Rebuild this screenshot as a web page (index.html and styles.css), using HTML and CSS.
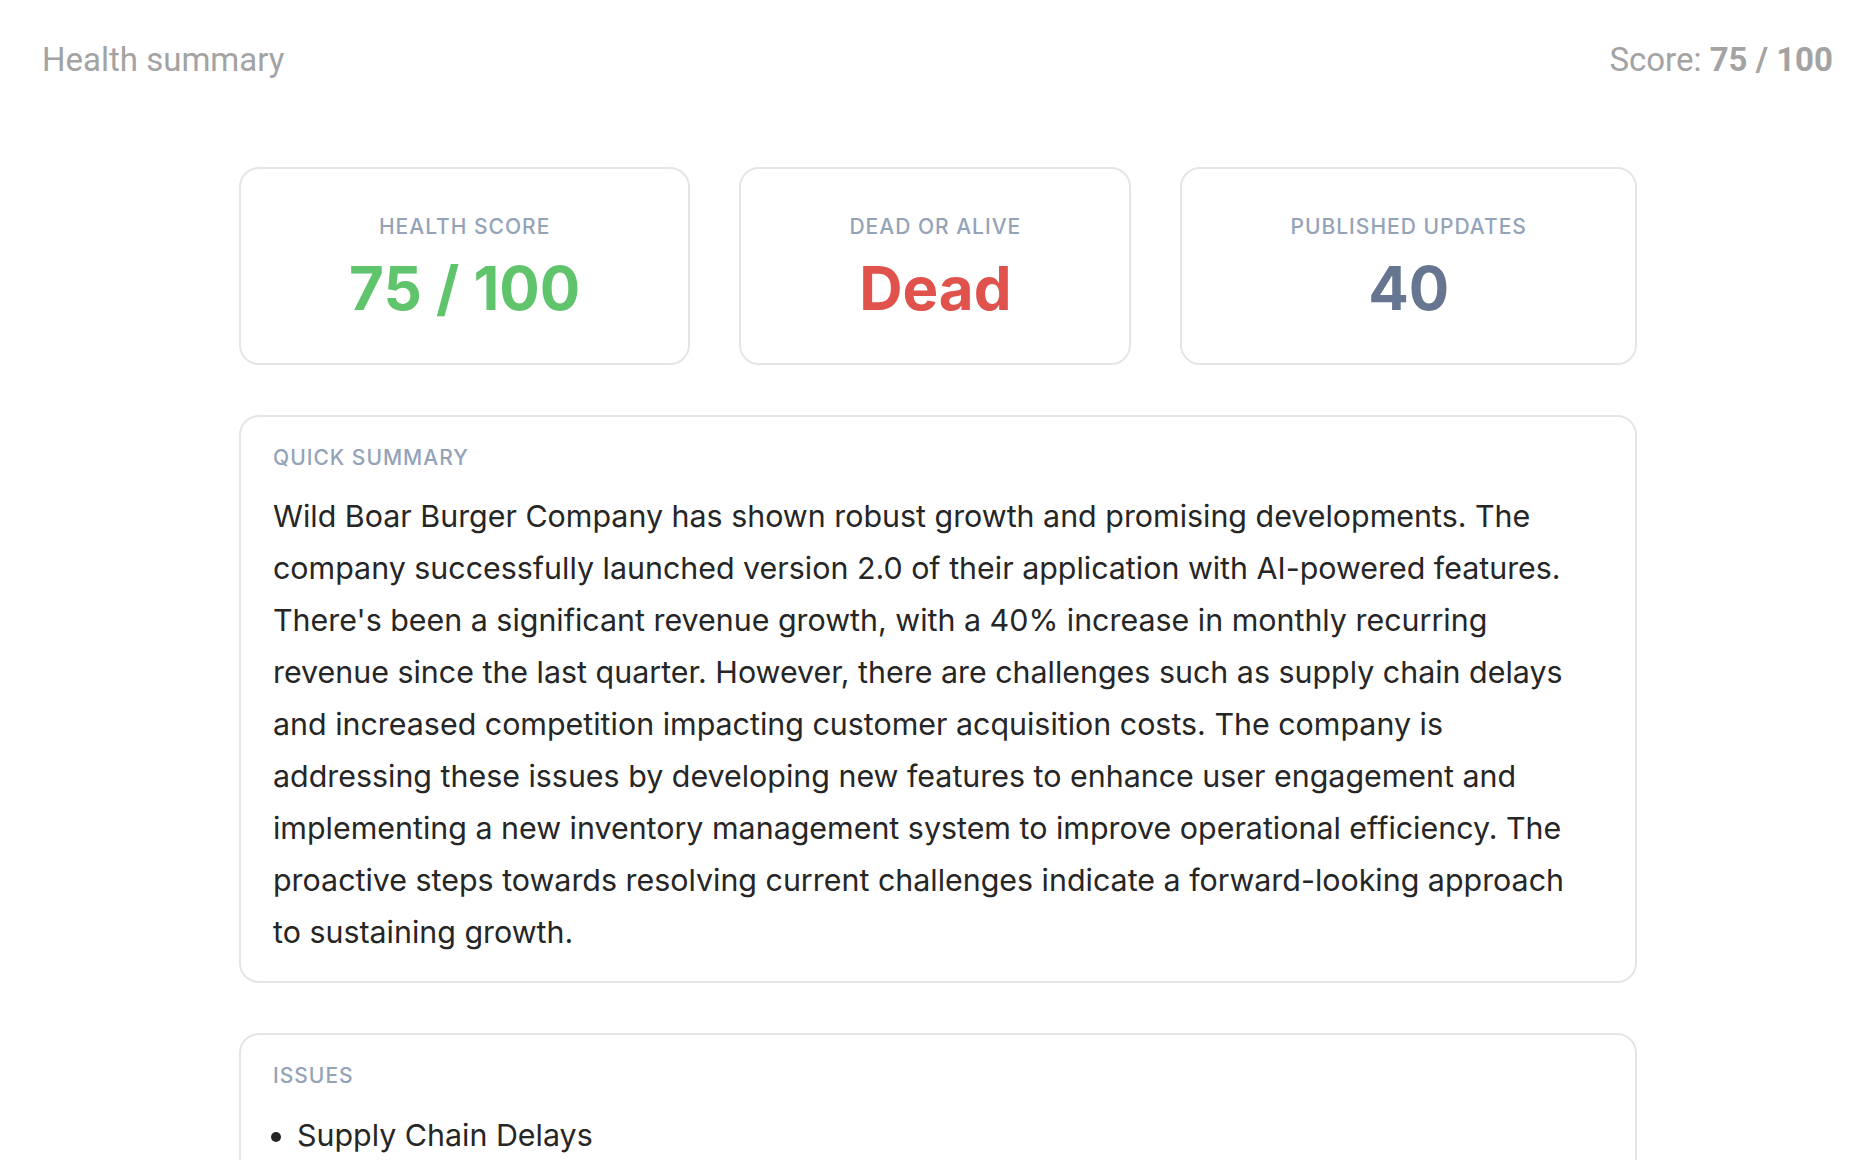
FILE: index.html
```html
<!DOCTYPE html>
<html lang="en">
<head>
<meta charset="UTF-8">
<meta name="viewport" content="width=device-width, initial-scale=1.0">
<title>Health summary</title>
<link rel="stylesheet" href="styles.css">
</head>
<body>
<div class="topbar">
  <span class="page-title">Health summary</span>
  <span class="score">Score: <b>75 / 100</b></span>
</div>

<div class="content">
  <div class="stats">
    <div class="stat-card">
      <div class="label">Health score</div>
      <div class="stat-value green">75 / 100</div>
    </div>
    <div class="stat-card">
      <div class="label">Dead or alive</div>
      <div class="stat-value red">Dead</div>
    </div>
    <div class="stat-card">
      <div class="label">Published updates</div>
      <div class="stat-value slate">40</div>
    </div>
  </div>

  <div class="panel">
    <div class="label">Quick summary</div>
    <p class="summary-text">Wild Boar Burger Company has shown robust growth and promising developments. The company successfully launched version 2.0 of their application with AI-powered features. There's been a significant revenue growth, with a 40% increase in monthly recurring revenue since the last quarter. However, there are challenges such as supply chain delays and increased competition impacting customer acquisition costs. The company is addressing these issues by developing new features to enhance user engagement and implementing a new inventory management system to improve operational efficiency. The proactive steps towards resolving current challenges indicate a forward-looking approach to sustaining growth.</p>
  </div>

  <div class="panel">
    <div class="label">Issues</div>
    <ul class="issue-list">
      <li>Supply Chain Delays</li>
    </ul>
  </div>
</div>
</body>
</html>
```

FILE: styles.css
```css
body {
  margin: 0;
  font-family: Inter, "Noto Sans", sans-serif;
  background-color: #fff;
  color: #262626;
}
.topbar {
  display: flex;
  justify-content: space-between;
  align-items: center;
  padding: 39px 43px 0 42px;
  font-family: Roboto, "Noto Sans", sans-serif;
  font-size: 33px;
  line-height: 41px;
  color: #a3a3a3;
}
.score b {
  font-weight: 700;
}
.content {
  width: 1398px;
  margin: 87px auto 0;
  display: flex;
  flex-direction: column;
  gap: 50px;
}
.stats {
  display: flex;
  gap: 49px;
}
.stat-card {
  flex: 1 1 auto;
  border: 2px solid #e5e5e5;
  border-radius: 20px;
  padding: 45px 24px 39px;
  text-align: center;
}
.label {
  font-size: 21px;
  line-height: 1.2;
  font-weight: 500;
  letter-spacing: 1px;
  text-transform: uppercase;
  color: #94a3b8;
}
.stat-value {
  margin-top: 13px;
  font-size: 60px;
  line-height: 72px;
  font-weight: 700;
}
.green {
  color: #5fc46b;
}
.red {
  color: #e0524c;
}
.slate {
  color: #667590;
}
.panel {
  border: 2px solid #e5e5e5;
  border-radius: 20px;
  padding: 28px 40px 23px 32px;
}
.summary-text {
  margin: 20px 0 0;
  font-size: 30.4px;
  line-height: 52px;
}
.issue-list {
  margin: 20px 0 0;
  padding-left: 24px;
  font-size: 30.4px;
  line-height: 52px;
}
```
